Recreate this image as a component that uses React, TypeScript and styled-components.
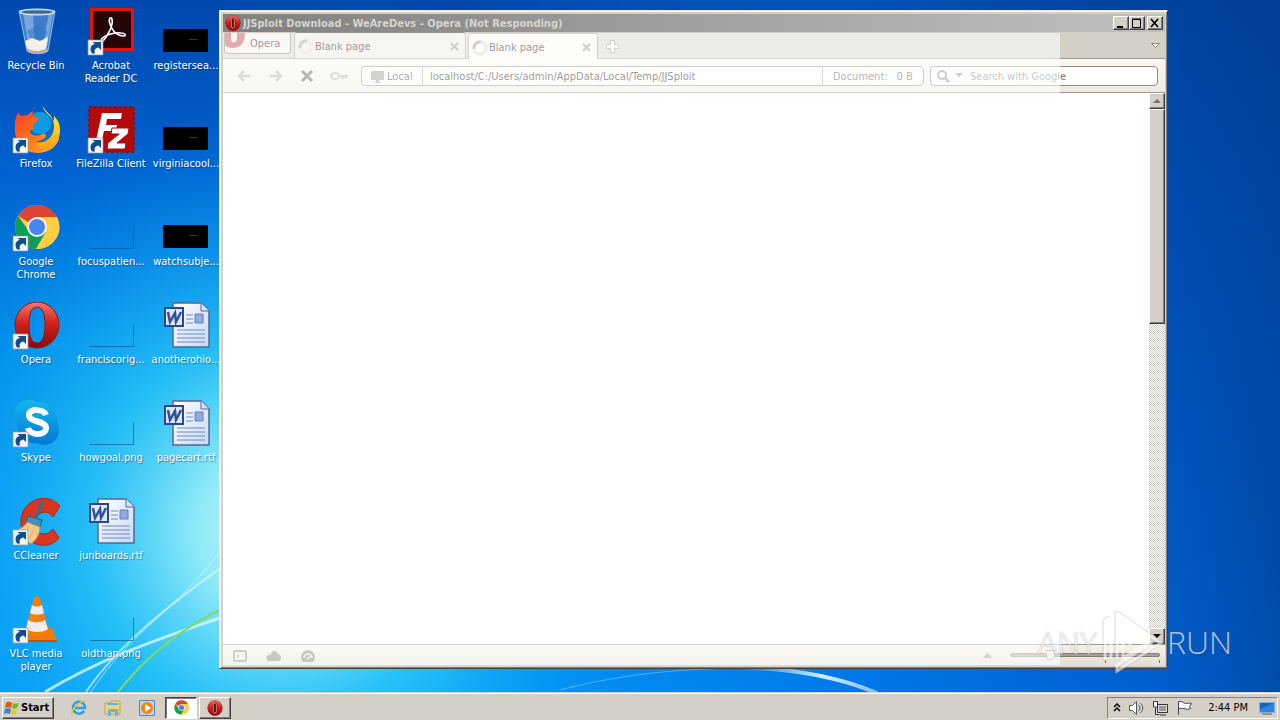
import React from 'react';
import styled, { createGlobalStyle, css } from 'styled-components';

const font = '"DejaVu Sans Condensed", "DejaVu Sans", Tahoma, sans-serif';

const GlobalStyle = createGlobalStyle`
  * { box-sizing: border-box; }
  body { margin: 0; font-family: ${font}; font-size: 11px; line-height: 13px; color: #000; }
  button, input { font: inherit; color: inherit; margin: 0; padding: 0; border: 0; background: none; min-width: 0; }
  svg { display: block; flex: none; }
`;

const raised = css`
  border: 1px solid;
  border-color: #fff #404040 #404040 #fff;
  box-shadow: inset -1px -1px 0 #808080;
  background: #d4d0c8;
`;

const Screen = styled.div`
  display: flex;
  flex-direction: column;
  min-height: 100vh;
  overflow: hidden;
  background: #0068d8;
`;

const Desktop = styled.main`
  position: relative;
  flex: 1;
  min-height: 692px;
`;

const Wallpaper = styled.svg`
  position: absolute;
  inset: 0;
  width: 100%;
  height: 100%;
`;

const IconGrid = styled.ul`
  position: relative;
  display: grid;
  grid-auto-flow: column;
  grid-template-rows: repeat(7, 98px);
  grid-auto-columns: 72px;
  column-gap: 3px;
  width: max-content;
  margin: 0;
  padding: 0;
  list-style: none;
`;

const Shortcut = styled.button`
  display: flex;
  flex-direction: column;
  align-items: center;
  gap: 3px;
  width: 100%;
  padding-top: 8px;
  color: #fff;
  white-space: pre;
  text-shadow: 1px 1px 1px rgba(0, 40, 90, 0.5);
`;

const WindowFrame = styled.section`
  position: absolute;
  inset: 10px 112px 23px 219px;
  display: flex;
  flex-direction: column;
  padding: 3px 2px 2px 3px;
  background: #d4d0c8;
  border: 1px solid;
  border-color: #e8e6e1 #404040 #404040 #e8e6e1;
  box-shadow: inset 1px 1px 0 #fff, inset -1px -1px 0 #808080;
`;

const TitleBar = styled.header`
  display: flex;
  align-items: center;
  gap: 2px;
  height: 18px;
  padding: 0 2px;
  background: linear-gradient(90deg, #808080, #c0c0c0);
`;

const WindowTitle = styled.h1`
  flex: 1;
  margin: 0;
  font-size: 11px;
  font-weight: bold;
  color: #d8d5ce;
`;

const CaptionButton = styled.button<{ $apart?: boolean }>`
  ${raised}
  display: grid;
  place-items: center;
  width: 16px;
  height: 14px;
  margin-left: ${(p) => (p.$apart ? 0 : -2)}px;
`;

const Client = styled.div`
  flex: 1;
  display: flex;
  flex-direction: column;
`;

const TabBar = styled.nav`
  display: flex;
  align-items: flex-end;
  height: 27px;
  gap: 2px;
  padding-left: 1px;
  padding-right: 4px;
  border-bottom: 1px solid #9c9890;
  background: #d4cfc7;
`;

const OperaMenu = styled.button`
  display: flex;
  align-self: flex-start;
  gap: 5px;
  width: 67px;
  height: 21px;
  margin-top: 1px;
  margin-right: 1px;
  overflow: hidden;
  border: 1px solid #77736c;
  border-top: 0;
  border-radius: 0 0 4px 4px;
  background: #f0ede8;
  line-height: 22px;
`;

const Tab = styled.div<{ $active?: boolean }>`
  display: flex;
  align-items: center;
  width: ${(p) => (p.$active ? 130 : 172)}px;
  height: 26px;
  margin-bottom: ${(p) => (p.$active ? -1 : 0)}px;
  padding: 2px 5px 0 3px;
  border: 1px solid #98948c;
  border-bottom: 0;
  border-radius: 4px 4px 0 0;
  background: ${(p) => (p.$active ? '#faf7f1' : '#eae5dd')};
`;

const TabLabel = styled.button`
  display: flex;
  flex: 1;
  align-items: center;
  gap: 1px;
`;

const IconButton = styled.button`
  display: grid;
  place-items: center;
  width: 11px;
  height: 24px;
`;

const NewTab = styled(IconButton)`
  width: 24px;
`;

const TabList = styled(IconButton)`
  margin-left: auto;
`;

const ToolBar = styled.div`
  display: flex;
  align-items: center;
  gap: 6px;
  height: 34px;
  padding: 0 7px 0 5px;
  border-bottom: 1px solid #9c9890;
  background: linear-gradient(#faf7f1, #eeebe2);
`;

const NavButtons = styled.div`
  display: flex;
  width: 127px;
`;

const NavButton = styled.button`
  display: grid;
  place-items: center;
  width: 32px;
  height: 24px;
`;

const Field = styled.div<{ $search?: boolean }>`
  display: flex;
  align-items: center;
  flex: ${(p) => (p.$search ? '0 0 228px' : '1')};
  height: 20px;
  gap: ${(p) => (p.$search ? 5 : 0)}px;
  padding-left: ${(p) => (p.$search ? 5 : 0)}px;
  border: 1px solid #8f8b83;
  border-radius: 4px;
  background: #fff;
`;

const Badge = styled.span`
  display: flex;
  align-items: center;
  gap: 3px;
  width: 61px;
  height: 18px;
  padding: 2px 0 0 9px;
  border-right: 1px solid #aaa69e;
  color: #333;
`;

const TextInput = styled.input`
  flex: 1;
  height: 18px;
  padding: 2px 0 0 7px;
  outline: none;
`;

const SearchInput = styled(TextInput)`
  padding-left: 2px;
  &::placeholder { color: #777; opacity: 1; }
`;

const DocumentSize = styled.span`
  display: flex;
  align-items: center;
  gap: 9px;
  width: 101px;
  height: 18px;
  padding: 2px 0 0 10px;
  border-left: 1px solid #aaa69e;
  color: #444;
`;

const Page = styled.div`
  display: flex;
  justify-content: flex-end;
  flex: 1;
  background: #fff;
`;

const ScrollBar = styled.div`
  display: flex;
  flex-direction: column;
  width: 16px;
  background: repeating-conic-gradient(#fff 0 25%, #d0ccc4 0 50%) 0 0 / 2px 2px;
`;

const ScrollButton = styled.button`
  ${raised}
  display: grid;
  place-items: center;
  height: 16px;
`;

const ScrollThumb = styled.div`
  ${raised}
  flex: 0 0 39%;
`;

const Spacer = styled.div`
  flex: 1;
`;

const StatusBar = styled.footer`
  display: flex;
  align-items: center;
  gap: 18px;
  height: 22px;
  padding: 0 5px 0 9px;
  border-top: 1px solid #9c9890;
  background: linear-gradient(#f5f2ea, #e2ded5);
`;

const Zoom = styled.input`
  width: 150px;
  height: 16px;
  margin-bottom: 2px;
  appearance: none;
  background:
    linear-gradient(#77736b, #77736b) 95px 100% / 1px 3px no-repeat,
    linear-gradient(#77736b, #77736b) 149px 100% / 1px 3px no-repeat;
  &::-webkit-slider-runnable-track {
    height: 4px;
    border: 1px solid #807d76;
    border-radius: 2px;
    background: #a5a199;
  }
  &::-webkit-slider-thumb {
    appearance: none;
    width: 9px;
    height: 10px;
    margin-top: -4px;
    border: 1px solid #8a867e;
    border-radius: 1px 1px 5px 5px;
    background: #eeeae2;
  }
`;

const FrozenVeil = styled.div`
  position: absolute;
  inset: 22px 107px 3px 3px;
  background: rgba(255, 255, 255, 0.6);
  pointer-events: none;
`;

const Watermark = styled.div`
  position: absolute;
  right: 48px;
  bottom: 18px;
  display: flex;
  align-items: center;
  gap: 3px;
  font-family: "Open Sans", sans-serif;
  font-size: 32px;
  font-weight: 300;
  line-height: 64px;
  color: rgba(255, 255, 255, 0.65);
  text-shadow: 0 0 2px rgba(90, 90, 90, 0.4);
  pointer-events: none;
`;

const TaskBar = styled.footer`
  display: flex;
  align-items: center;
  height: 28px;
  padding: 2px 2px 0;
  border-top: 1px solid #d4d0c8;
  box-shadow: inset 0 1px 0 #fff;
  background: #d4d0c8;
`;

const StartButton = styled.button`
  ${raised}
  display: flex;
  align-items: center;
  gap: 1px;
  width: 52px;
  height: 22px;
  margin-right: 7px;
  padding-left: 1px;
  font-weight: bold;
`;

const TaskButton = styled.button<{ $state?: 'raised' | 'pressed' }>`
  display: grid;
  place-items: center;
  width: 32px;
  height: 22px;
  margin-left: 2px;
  ${(p) => p.$state === 'raised' && raised}
  ${(p) =>
    p.$state === 'pressed' &&
    css`
      border: 1px solid;
      border-color: #404040 #fff #fff #404040;
      box-shadow: inset 1px 1px 0 #808080;
      background: #fff;
    `}
`;

const Tray = styled.div`
  display: flex;
  align-items: center;
  gap: 7px;
  height: 22px;
  margin-left: auto;
  padding: 0 2px 0 5px;
  border: 1px solid;
  border-color: #808080 #fff #fff #808080;
`;

const Clock = styled.time`
  margin: 0 4px 0 8px;
  white-space: nowrap;
`;

const LinkArrow = () => (
  <g>
    <path d="M1 32h15v15H1z" fill="#f2f5fa" stroke="#9a9a9a" strokeWidth=".7" />
    <path d="M5 45.500c-3-5-1-9 3-9.500L5.500 34H14v8l-2.500-2.500C8 40 7 42 8 45.500z" fill="#0d4c8e" />
  </g>
);

const RecycleBin = () => (
  <>
    <path d="M7 3h36l-7 40c-3 3-18 3-21 0z" fill="#7db0e4" fillOpacity=".5" stroke="#c9dff2" strokeOpacity=".7" />
    <path d="m11 5 6 36 6 1L21 6zM37 5l-7 36 5-2 6-34z" fill="#e5f2fb" fillOpacity=".35" />
    <path d="m15 23 10-6 11 7-5 8-13-2z" fill="#2c74c4" fillOpacity=".5" />
    <path d="m13 33 7-3 8 3 8-4-2 12c-5 3-15 3-19 0z" fill="#f4efe7" />
    <path d="M15 40c4 4 17 4 21 0l-1 4c-5 3-14 3-19 0z" fill="#bcae9f" />
    <ellipse cx="25" cy="4" rx="18" ry="3" fill="#98b6cd" stroke="#e5ecf1" />
    <ellipse cx="25" cy="4" rx="15" ry="1.6" fill="#40668d" />
  </>
);

const Acrobat = () => (
  <>
    <path d="M3 0h44v43H3z" fill="#e2160c" />
    <path d="M6 3h38v37H6z" fill="#250508" />
    <path d="M15 33c2 0 12-14 10-22-1-3-4 0-2 5 3 9 9 12 13 12s2-3-2-3c-7-1-20 3-20 8" fill="none" stroke="#fff" strokeWidth="1.6" />
    <LinkArrow />
  </>
);

const Firefox = () => (
  <>
    <circle cx="26" cy="22" r="16" fill="#0870ca" />
    <circle cx="28" cy="17" r="11" fill="#0a9be4" />
    <path d="M3 17C3 13 4 9 7 6c0 2 1 3 3 4 2-1 4-1 6-1 1-2 3-3 5-4-1 3 0 5 2 6 4 0 4 1 3 3-1 2-4 3-5 5 0 2 1 3 1 4-3 0-4 1-4 3 2 5 9 4 12 2 2-1 4 0 4 2-2 4-7 5-10 5 7 4 15-1 18-8l5 6c-3 9-12 14-21 14C11 47 1 36 3 17z" fill="url(#fire)" />
    <path d="M31 0c0 7 10 9 11 19 1 11-8 19-18 18 2 4 8 7 12 6 8-3 12-10 12-19 0-7-3-11-6-14 0 3 0 4-1 5C40 8 33 6 31 0z" fill="url(#flame)" />
    <LinkArrow />
  </>
);

const FileZilla = () => (
  <>
    <path d="M2 1h45v45H2z" fill="#b30909" stroke="#8a1018" strokeWidth="2" strokeDasharray="3 2" />
    <path d="M15 7h20l-1 6H20l-1 6h11l-1 6H17l-3 14H8z" fill="#fff" />
    <path d="M25 22h17l-1 6-11 9h9l-1 6H20l1-6 11-9h-8z" fill="#fff" stroke="#b30909" strokeWidth="1" />
    <LinkArrow />
  </>
);

const ChromeMark = () => (
  <>
    <circle cx="25" cy="23" r="22" fill="#ffcd40" />
    <path d="M25 23 6 12A22 22 0 0 1 45 13H25z" fill="#db4437" />
    <path d="M6 12a22 22 0 0 0 18 33l10-17-9-5-8 4z" fill="#0f9d58" />
    <path d="M25 13h20a22 22 0 0 1-21 32l10-17z" fill="#ffcd40" />
    <circle cx="25" cy="23" r="10" fill="#f5f5f5" />
    <circle cx="25" cy="23" r="8" fill="#4a84ee" />
  </>
);

const Chrome = () => (
  <>
    <ChromeMark />
    <LinkArrow />
  </>
);

const OperaMark = () => (
  <path
    fillRule="evenodd"
    d="M25 0a22 23 0 1 0 0 46 22 23 0 0 0 0-46zm0 5c6 0 8 8 8 18s-2 18-8 18-8-8-8-18 2-18 8-18z"
    fill="url(#opera)"
    stroke="#9b1010"
    strokeWidth="1"
  />
);

const Opera = () => (
  <>
    <OperaMark />
    <LinkArrow />
  </>
);

const Skype = () => (
  <>
    <path d="M5 5c6-7 15-6 19-3 12-1 22 8 21 20 4 7 2 18-6 21-5 3-11 2-14 0C13 44 3 35 5 22 2 17 2 10 5 5z" fill="url(#skype)" />
    <path d="M34 15c-2-6-17-7-17 0 0 8 17 5 17 13 0 8-16 8-18 0" fill="none" stroke="#fff" strokeWidth="6" />
    <LinkArrow />
  </>
);

const CCleaner = () => (
  <>
    <path d="m48 8-7 11c-5-8-16-6-18 5-2 12 11 16 18 7l6 9C36 54 10 47 9 25 8 3 34-8 48 8z" fill="#d93620" stroke="#ad2414" />
    <path d="M31 3 24 20" stroke="#21729d" strokeWidth="3" />
    <path d="m16 18 14 4-2 7-14-4z" fill="#3b92bd" stroke="#21658d" />
    <path d="m15 24 13 5c0 8-4 13-9 17L0 33c7-1 12-4 15-9z" fill="#f4c98c" stroke="#bd8754" />
    <path d="m18 27-7 10m12-8-6 12" stroke="#e3b377" />
    <LinkArrow />
  </>
);

const Vlc = () => (
  <>
    <path d="m8 33 32-1 5 13H8z" fill="#ef7a08" />
    <path d="M8 44h37v2H8z" fill="#bd5203" />
    <path d="M22 2c1-2 5-2 6 0l9 34c-4 5-20 5-24 0z" fill="#f57e09" />
    <path d="m20 9-2 8c4 2 10 2 14 0l-2-8c-3 2-7 2-10 0zM16 24l-2 9c6 4 17 4 22 0l-3-9c-5 3-12 3-17 0z" fill="#eeedec" />
    <LinkArrow />
  </>
);

const WordFile = () => (
  <>
    <path d="M11 1h28l8 8v36H11z" fill="url(#paper)" stroke="#54678e" strokeWidth="1.5" />
    <path d="M39 1v8h8" fill="#d8e5fb" stroke="#54678e" />
    <path d="M24 13h7m-7 4h7m-7 4h7m-16 7h28M15 32h28M15 36h28M15 40h28" stroke="#7188bb" />
    <path d="M33 12h8v9h-8z" fill="#8faade" stroke="#6480bd" />
    <path d="M3 6h18v18H3z" fill="#dfe8fb" stroke="#2c4791" strokeWidth="2" />
    <path d="m6 10 2 10 5-9 1 9 5-10" fill="none" stroke="#32509b" strokeWidth="2.5" />
  </>
);

const DarkImage = () => (
  <>
    <path d="M1 21h45v23H1z" fill="#000" />
    <path d="M27 31.500h9" stroke="#333" />
  </>
);

const ClearImage = () => (
  <path d="M3 44.500h43.500V22" fill="none" stroke="#064f85" strokeOpacity=".6" />
);

const shortcuts: [string, () => React.ReactElement][] = [
  ['Recycle Bin', RecycleBin],
  ['Firefox', Firefox],
  ['Google\nChrome', Chrome],
  ['Opera', Opera],
  ['Skype', Skype],
  ['CCleaner', CCleaner],
  ['VLC media\nplayer', Vlc],
  ['Acrobat\nReader DC', Acrobat],
  ['FileZilla Client', FileZilla],
  ['focuspatien...', ClearImage],
  ['franciscorig...', ClearImage],
  ['howgoal.png', ClearImage],
  ['junboards.rtf', WordFile],
  ['oldthan.png', ClearImage],
  ['registersea...', DarkImage],
  ['virginiacool...', DarkImage],
  ['watchsubje...', DarkImage],
  ['anotherohio...', WordFile],
  ['pagecart.rtf', WordFile],
];

const Backdrop = () => (
  <Wallpaper viewBox="0 0 1280 692" preserveAspectRatio="none" aria-hidden="true">
    <defs>
      <linearGradient id="sky" x2="0" y2="1">
        <stop offset="0" stopColor="#0048ae" />
        <stop offset=".25" stopColor="#0062d0" />
        <stop offset=".5" stopColor="#008ae8" />
        <stop offset="1" stopColor="#009cfa" />
      </linearGradient>
      <radialGradient id="glow" gradientUnits="userSpaceOnUse" cx="280" cy="530" r="420">
        <stop offset="0" stopColor="#c4f8f8" />
        <stop offset=".2" stopColor="#8eeaf8" />
        <stop offset=".45" stopColor="#2cc6f8" stopOpacity=".85" />
        <stop offset=".75" stopColor="#12a4f2" stopOpacity=".4" />
        <stop offset="1" stopColor="#0080e8" stopOpacity="0" />
      </radialGradient>
      <linearGradient id="shade" x2="1" y2="0">
        <stop offset=".35" stopColor="#0072e8" stopOpacity="0" />
        <stop offset=".7" stopColor="#0070e4" stopOpacity=".9" />
        <stop offset=".9" stopColor="#0060d0" />
        <stop offset="1" stopColor="#004eac" />
      </linearGradient>
      <linearGradient id="dusk" x2="0" y2="1">
        <stop offset="0" stopColor="#003a90" stopOpacity=".75" />
        <stop offset=".45" stopColor="#003c95" stopOpacity=".4" />
        <stop offset="1" stopColor="#003c95" stopOpacity="0" />
      </linearGradient>
      <linearGradient id="side">
        <stop offset=".3" stopColor="#000" />
        <stop offset=".85" stopColor="#fff" />
      </linearGradient>
      <mask id="eastern"><path d="M0 0h1280v692H0z" fill="url(#side)" /></mask>
      <linearGradient id="fire" x2="1" y2="1">
        <stop offset="0" stopColor="#ff392e" />
        <stop offset=".5" stopColor="#ff7617" />
        <stop offset="1" stopColor="#ffb52c" />
      </linearGradient>
      <linearGradient id="flame" x2="0" y2="1">
        <stop offset="0" stopColor="#fff04a" />
        <stop offset=".5" stopColor="#ffd21f" />
        <stop offset="1" stopColor="#ff9d1c" />
      </linearGradient>
      <linearGradient id="opera" x2="0" y2="1">
        <stop offset="0" stopColor="#f37a70" />
        <stop offset=".45" stopColor="#d4221c" />
        <stop offset="1" stopColor="#900707" />
      </linearGradient>
      <linearGradient id="skype" x2="0" y2="1">
        <stop offset="0" stopColor="#16b6ed" />
        <stop offset="1" stopColor="#0078d4" />
      </linearGradient>
      <linearGradient id="paper" x2="1" y2="1">
        <stop offset="0" stopColor="#fff" />
        <stop offset="1" stopColor="#c8d9f6" />
      </linearGradient>
      <linearGradient id="streak">
        <stop offset="0" stopColor="#cfefff" stopOpacity="0" />
        <stop offset=".6" stopColor="#e8fbff" stopOpacity=".9" />
        <stop offset="1" stopColor="#cfefff" stopOpacity=".6" />
      </linearGradient>
    </defs>
    <path d="M0 0h1280v692H0z" fill="url(#sky)" />
    <path d="M0 0h1280v692H0z" fill="url(#glow)" />
    <path d="M0 0h1280v692H0z" fill="url(#shade)" />
    <path d="M0 0h1280v692H0z" fill="url(#dusk)" mask="url(#eastern)" />
    <g fill="none" stroke="#dffaff">
      <path d="M45 692c60-36 120-55 180-76" strokeWidth="3" strokeOpacity=".75" />
      <path d="M86 692c34-50 90-92 140-128" strokeWidth="2" strokeOpacity=".65" />
      <path d="M91 692c40-62 85-80 130-142" strokeWidth="1" strokeOpacity=".6" />
      <path d="M118 692c25-32 60-62 106-84" stroke="#7edb62" strokeWidth="2" />
      <path d="M560 690c70-18 130-22 200-22" strokeWidth="1" strokeOpacity=".35" />
      <path d="M740 668c55 0 100 10 137 25" stroke="url(#streak)" strokeWidth="4" />
    </g>
  </Wallpaper>
);

const Spinner = () => (
  <svg width="16" height="16" fill="none" strokeWidth="3">
    <circle cx="8" cy="8" r="6" stroke="#dad6ce" />
    <path d="M2 9a6 6 0 0 1 7-7" stroke="#969289" />
  </svg>
);

const TabClose = () => (
  <IconButton aria-label="Close tab">
    <svg width="9" height="9" stroke="#87837b" strokeWidth="2"><path d="m1 1 7 7m0-7L1 8" /></svg>
  </IconButton>
);

const OperaIcon = () => (
  <svg width="16" height="16" viewBox="2 -1 46 48">
    <circle cx="25" cy="23" r="22" fill="#b51414" />
    <OperaMark />
    <rect x="20" y="8" width="9" height="30" rx="4" fill="#4a1010" stroke="#f0c4c0" strokeWidth="2" />
  </svg>
);

export default function App() {
  return (
    <Screen>
      <GlobalStyle />
      <Desktop>
        <Backdrop />
        <IconGrid>
          {shortcuts.map(([name, Art]) => (
            <li key={name}>
              <Shortcut>
                <svg width="48" height="48" viewBox="0 0 48 48" aria-hidden="true"><Art /></svg>
                {name}
              </Shortcut>
            </li>
          ))}
        </IconGrid>

        <WindowFrame>
          <TitleBar>
            <OperaIcon />
            <WindowTitle>JJSploit Download - WeAreDevs - Opera (Not Responding)</WindowTitle>
            <CaptionButton aria-label="Minimize">
              <svg width="10" height="10"><path d="M1 8h6v2H1z" /></svg>
            </CaptionButton>
            <CaptionButton aria-label="Maximize">
              <svg width="10" height="10" fill="none" stroke="#000"><path d="M.5 1.500h8v8h-8zM0 1h9" /></svg>
            </CaptionButton>
            <CaptionButton aria-label="Close" $apart>
              <svg width="10" height="10" stroke="#000" strokeWidth="1.6"><path d="m1 1 7 8m0-8L1 9" /></svg>
            </CaptionButton>
          </TitleBar>

          <Client>
            <TabBar>
              <OperaMenu>
                <svg width="20" height="16"><path d="M0 0h6v5c0 6 5 6 6 0V0h8c0 10-5 15-12 15-4 0-6-1-8-3z" fill="#bd2c2c" /></svg>
                Opera
              </OperaMenu>
              <Tab><TabLabel><Spinner />Blank page</TabLabel><TabClose /></Tab>
              <Tab $active><TabLabel><Spinner />Blank page</TabLabel><TabClose /></Tab>
              <NewTab aria-label="New tab">
                <svg width="13" height="13" fill="#fff" stroke="#8e8a82"><path d="M4.500.5h4v4h4v4h-4v4h-4v-4h-4v-4h4z" /></svg>
              </NewTab>
              <TabList aria-label="Closed tabs">
                <svg width="9" height="6" fill="#fff" stroke="#8e8a82"><path d="M.5.5h8l-4 4z" /></svg>
              </TabList>
            </TabBar>

            <ToolBar>
              <NavButtons>
                <NavButton aria-label="Back">
                  <svg width="14" height="12" fill="none" stroke="#aaa79f" strokeWidth="2.500"><path d="M7 1 2 6l5 5M2 6h11" /></svg>
                </NavButton>
                <NavButton aria-label="Forward">
                  <svg width="14" height="12" fill="none" stroke="#aaa79f" strokeWidth="2.500"><path d="m7 1 5 5-5 5m5-5H1" /></svg>
                </NavButton>
                <NavButton aria-label="Stop">
                  <svg width="12" height="12" stroke="#4c4a46" strokeWidth="3"><path d="m1 1 10 10m0-10L1 11" /></svg>
                </NavButton>
                <NavButton aria-label="Log in">
                  <svg width="18" height="10" fill="none" stroke="#aaa79f" strokeWidth="2"><ellipse cx="5" cy="5" rx="4" ry="3" /><path d="M9 5h9m-5 0v3m3-3v3" /></svg>
                </NavButton>
              </NavButtons>
              <Field>
                <Badge>
                  <svg width="13" height="12" fill="#928f88"><rect width="13" height="9" rx="1" /><path d="M5 9h3v2h2v1H3v-1h2z" /></svg>
                  Local
                </Badge>
                <TextInput aria-label="Address" defaultValue="localhost/C:/Users/admin/AppData/Local/Temp/JJSploit" />
                <DocumentSize><span>Document:</span><span>0 B</span></DocumentSize>
              </Field>
              <Field $search>
                <svg width="14" height="14" fill="none" stroke="#89857d" strokeWidth="2"><circle cx="6" cy="6" r="4" /><path d="m9 9 4 4" strokeWidth="3" /></svg>
                <svg width="8" height="5" fill="#89857d"><path d="M0 0h8L4 4z" /></svg>
                <SearchInput aria-label="Search" placeholder="Search with Google" />
              </Field>
            </ToolBar>

            <Page>
              <ScrollBar>
                <ScrollButton aria-label="Scroll up">
                  <svg width="8" height="5" fill="#77736b"><path d="M0 4h8L4 0z" /></svg>
                </ScrollButton>
                <ScrollThumb />
                <Spacer />
                <ScrollButton aria-label="Scroll down">
                  <svg width="8" height="5"><path d="M0 0h8L4 4z" /></svg>
                </ScrollButton>
              </ScrollBar>
            </Page>

            <StatusBar>
              <svg width="16" height="12" fill="none" stroke="#666"><rect x="2" y="1" width="12" height="10" rx="1" strokeWidth="1.500" /><path d="m5 4 2 2-2 2" /></svg>
              <svg width="16" height="12" fill="#77746e"><path d="M4 11a3 3 0 0 1-1-6c1 0 2-1 2-1 1-4 6-4 7 0 4 1 4 7 0 7z" /></svg>
              <svg width="16" height="12"><path d="M3 12a7 7 0 1 1 10 0z" fill="#77746e" /><path d="M4 8a4 4 0 0 1 8 0M7 9l4-3" fill="none" stroke="#eee" strokeWidth="1.5" /></svg>
              <Spacer />
              <svg width="9" height="6" fill="#8b8983"><path d="M0 5h9L4.500 0z" /></svg>
              <Zoom type="range" aria-label="Page zoom" defaultValue={25} />
            </StatusBar>
          </Client>
          <FrozenVeil />
        </WindowFrame>

        <Watermark>
          <span>ANY</span>
          <svg width="64" height="62" fill="none" stroke="#fff" strokeOpacity=".6" strokeWidth="3">
            <path d="M5 49V10l4-3M11 12v35" />
            <path d="M17 46V2l44 30-44 28v-6l34-22-28-19v34l24-15-17-11v13" />
            <path d="M3 50V9l6-4M15 47V1l3-1 45 32-45 29-3-1" stroke="#888" strokeOpacity=".3" strokeWidth="1" />
          </svg>
          <span>RUN</span>
        </Watermark>
      </Desktop>

      <TaskBar>
        <StartButton>
          <svg width="16" height="16">
            <path d="M2 3c2-2 4-1 6 0L7 8C5 7 3 7 1 8z" fill="#e25520" />
            <path d="M9 3c2 1 4 1 6 0l-2 5c-1 1-3 1-5 0z" fill="#78b72a" />
            <path d="M1 9c2-1 4-1 6 0l-1 5c-2-1-4-1-6 0z" fill="#3f82cc" />
            <path d="M8 9c2 1 4 1 5 0l-1 5c-2 1-4 1-5 0z" fill="#f4c425" />
          </svg>
          Start
        </StartButton>
        <TaskButton aria-label="Internet Explorer">
          <svg width="18" height="18" fill="none">
            <path d="M14 12a6 6 0 1 1 1-3H5" stroke="#2d9ee0" strokeWidth="2.500" />
            <path d="M3 16c-5-3 7-15 13-14" stroke="#edbd3d" strokeWidth="1.5" />
          </svg>
        </TaskButton>
        <TaskButton aria-label="Explorer">
          <svg width="18" height="18">
            <path d="M1 4h5l1-2h9v13H1z" fill="#f3d376" stroke="#c5a24b" />
            <path d="M3 5h11" stroke="#66aeda" strokeWidth="2" />
            <path d="M4 17v-7h10v7h-3v-4H7v4z" fill="#65b7dc" />
          </svg>
        </TaskButton>
        <TaskButton aria-label="Media Player">
          <svg width="18" height="18">
            <path d="M1.500 1.500h15v15h-15z" fill="#b7d5ed" stroke="#5588b5" />
            <circle cx="9" cy="9" r="6" fill="#f58414" /><path d="m7 5 6 4-6 4z" fill="#fff" />
          </svg>
        </TaskButton>
        <TaskButton aria-label="Chrome" $state="pressed">
          <svg width="15" height="15" viewBox="2 0 46 46"><ChromeMark /></svg>
        </TaskButton>
        <TaskButton aria-label="Opera" $state="raised"><OperaIcon /></TaskButton>
        <Tray>
          <svg width="8" height="10" fill="none" stroke="#000" strokeWidth="1.500"><path d="m1 4 3-3 3 3M1 8l3-3 3 3" /></svg>
          <svg width="17" height="16" fill="#fff" stroke="#555"><path d="M1.500 5.500h3l4-4v13l-4-4h-3z" /><path d="M10.500 5c2 2 2 4 0 6m2-8c3 3 3 7 0 10" fill="none" /></svg>
          <svg width="17" height="16" fill="#ddd" stroke="#333"><path d="M5.500 4.500h10v8h-10zM8 15h6M3.500 8v6.500h4" /><path d="M1.500 1.500h4V7h-4z" fill="#fff" /><path d="M7 6h7v5H7z" fill="#999" stroke="none" /></svg>
          <svg width="17" height="16" fill="#fff" stroke="#444"><path d="M2.500 15V1.500c4-1 5 2 7 2s3-1 6 0l-2 3 1 2c-4 2-6-1-12 0" /></svg>
          <Clock>2:44 PM</Clock>
          <svg width="16" height="14"><path d="M.5 1.500h15v10H.5z" fill="#1760c0" stroke="#83aede" /><path d="m1 8 14-6v9H1z" fill="#2b85e0" /><path d="M3 13h10" stroke="#555" /></svg>
        </Tray>
      </TaskBar>
    </Screen>
  );
}
